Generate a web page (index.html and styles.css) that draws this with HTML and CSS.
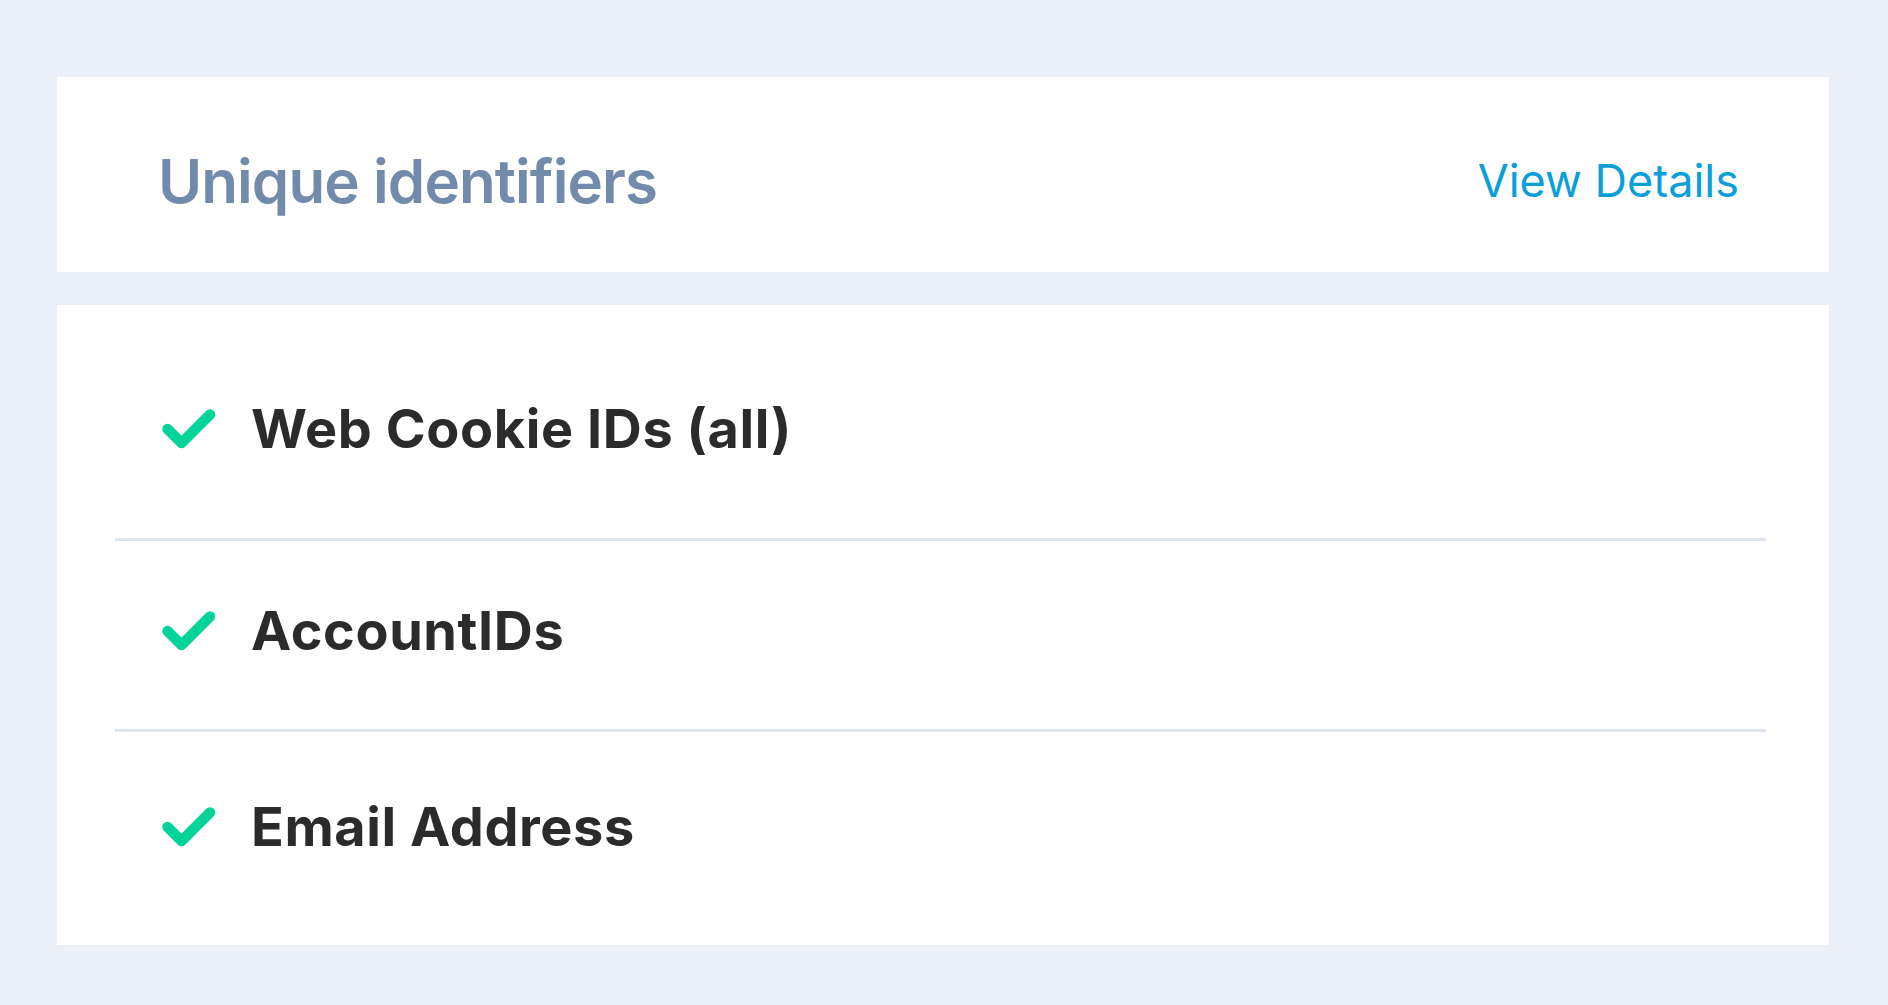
FILE: index.html
```html
<!DOCTYPE html>
<html lang="en">
<head>
  <meta charset="UTF-8">
  <meta name="viewport" content="width=device-width, initial-scale=1.0">
  <title>Unique identifiers</title>
  <link rel="stylesheet" href="styles.css">
</head>
<body>

  <div class="page">
    <header class="card head">
      <h2 class="title">Unique identifiers</h2>
      <a class="details" href="#">View Details</a>
    </header>

    <section class="card list">
      <div class="item">
        <svg class="check" viewBox="0 0 54 40"><polyline points="5.5,20 19.5,34 48,5.5"/></svg>
        <span class="label">Web Cookie IDs (all)</span>
      </div>
      <div class="item">
        <svg class="check" viewBox="0 0 54 40"><polyline points="5.5,20 19.5,34 48,5.5"/></svg>
        <span class="label">AccountIDs</span>
      </div>
      <div class="item">
        <svg class="check" viewBox="0 0 54 40"><polyline points="5.5,20 19.5,34 48,5.5"/></svg>
        <span class="label">Email Address</span>
      </div>
    </section>
  </div>

</body>
</html>
```

FILE: styles.css
```css
body {
  margin: 0;
  font-family: Inter, "Noto Sans", sans-serif;
  background-color: #ebeff7;
}

.page {
  padding: 77px 59px 60px 57px;
  display: flex;
  flex-direction: column;
  gap: 33px;
}

.card {
  background-color: #fff;
}

.head {
  display: flex;
  justify-content: space-between;
  align-items: center;
  padding: 74px 90px 61px 101px;
}

.title {
  margin: 0;
  font-size: 60px;
  line-height: 60px;
  font-weight: 600;
  letter-spacing: -0.9px;
  color: #728bab;
}

.details {
  font-size: 45px;
  line-height: 60px;
  color: #0a9fd8;
  text-decoration: none;
}

.list {
  padding: 0 63px 0 58px;
}

.item {
  display: flex;
  align-items: center;
  gap: 35px;
  padding: 70px 0 78px 47px;
  border-bottom: 3px solid #dce5f0;
}

.item:first-child {
  padding-top: 104px;
  padding-bottom: 89px;
}

.item:last-child {
  padding-top: 75px;
  padding-bottom: 98px;
  border-bottom: none;
}

.check {
  width: 54px;
  height: 40px;
  flex-shrink: 0;
}

.check polyline {
  fill: none;
  stroke: #04d49a;
  stroke-width: 10.5;
  stroke-linecap: round;
  stroke-linejoin: round;
}

.label {
  font-size: 54px;
  line-height: 40px;
  font-weight: 700;
  letter-spacing: 0.6px;
  color: #2b2b2b;
}
```
